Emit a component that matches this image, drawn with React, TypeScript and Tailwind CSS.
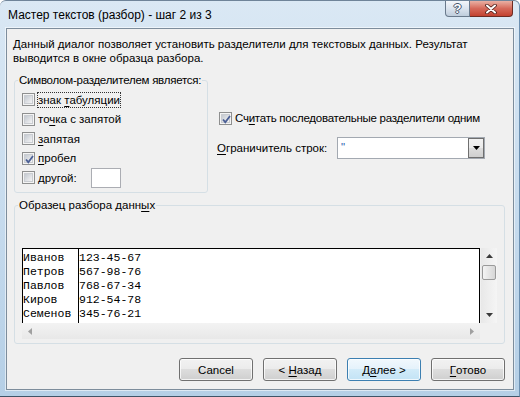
import clsx from 'clsx'
import type { ReactNode } from 'react'

function U({ children }: { children: ReactNode }) {
    return <span className="underline underline-offset-[2px]">{children}</span>
}

function Check({ on }: { on?: boolean }) {
    return (
        <span className="relative flex h-[13px] w-[13px] shrink-0 items-center justify-center border border-[#8e8f8f] bg-[#f4f4f4]">
            <span className="h-[9px] w-[9px] border border-[#c9ccd1] bg-gradient-to-br from-[#c4c9d0] to-[#f4f4f5]" />
            {on && (
                <svg className="absolute left-[1px] top-[1px]" width="11" height="11" viewBox="0 0 11 11">
                    <path d="M2 5.5 L4.3 8.2 L9 2" fill="none" stroke="#4b5f95" strokeWidth="1.8" />
                </svg>
            )}
        </span>
    )
}

function Btn({ children, focus }: { children: ReactNode; focus?: boolean }) {
    return (
        <div
            className={clsx(
                'flex h-[23px] w-[74px] items-center justify-center whitespace-pre rounded-[3px] border shadow-[inset_0_0_0_1px_rgba(255,255,255,0.75)]',
                focus
                    ? 'border-[#3c7fb1] bg-[linear-gradient(#f1f8fd_0%,#e4f2fb_50%,#d2ebf9_50%,#c3e3f5_100%)]'
                    : 'border-[#707070] bg-[linear-gradient(#f2f2f2_0%,#ebebeb_50%,#dddddd_50%,#cfcfcf_100%)]'
            )}
        >
            {children}
        </div>
    )
}

const delimiters: { label: ReactNode; on?: boolean; focus?: boolean }[] = [
    { label: <>знак <U>т</U>абуляции</>, focus: true },
    { label: <>то<U>ч</U>ка с запятой</> },
    { label: <><U>з</U>апятая</> },
    { label: <><U>п</U>робел</>, on: true },
]

export default function App() {
    return (
        <div className="flex h-[397px] w-[520px] flex-col overflow-hidden rounded-t-[6px] border-t border-r border-b border-t-[#6f8499] border-r-[#6b8fb0] border-b-[#3f5467] bg-gradient-to-b from-[#dae8f4] via-[#c8dcee] to-[#b5cfe6] font-['Liberation_Sans',Arial,sans-serif] text-[11.5px] leading-[14px] text-black">
            {/* Title bar */}
            <div className="flex h-[27px] shrink-0 items-start justify-between pl-[8px] pr-[6px]">
                <span className="pt-[7px] text-[12px]">Мастер текстов (разбор) - шаг 2 из 3</span>
                <div className="flex">
                    <div className="flex h-[16px] w-[25px] items-center justify-center rounded-bl-[4px] border border-t-0 border-[#6a7a8c] bg-gradient-to-b from-[#f3f6fa] via-[#dbe4ee] to-[#bfcddc] text-[13px] font-bold text-white [text-shadow:1px_0_#44546a,-1px_0_#44546a,0_1px_#44546a,0_-1px_#44546a]">
                        ?
                    </div>
                    <div className="flex h-[16px] w-[43px] items-center justify-center rounded-br-[4px] border border-t-0 border-l-0 border-[#6d2b22] bg-gradient-to-b from-[#e9b0a4] via-[#d5695a] to-[#c2412f]">
                        <svg width="14" height="10" viewBox="0 0 14 10">
                            <path d="M3 1.5 L11 8.5 M11 1.5 L3 8.5" stroke="#4a1c16" strokeWidth="3.6" strokeLinecap="round" />
                            <path d="M3 1.5 L11 8.5 M11 1.5 L3 8.5" stroke="#ffffff" strokeWidth="2" strokeLinecap="round" />
                        </svg>
                    </div>
                </div>
            </div>

            {/* Client area */}
            <div className="ml-[6px] flex h-[362px] w-[508px] shrink-0 flex-col border border-[#7d8d9c] bg-[#f0f0f0] shadow-[0_0_0_1px_rgba(255,255,255,0.55)]">
                <p className="pl-[6px] pt-[8px]">
                    Данный диалог позволяет установить разделители для текстовых данных. Результат
                    <br />
                    выводится в окне образца разбора.
                </p>

                <div className="mt-[8px] flex">
                    <fieldset className="ml-[7px] h-[120px] w-[194px] shrink-0 rounded-[3px] border border-[#d5dfe5]">
                        <legend className="ml-[3px] whitespace-nowrap px-[1px] tracking-[-0.25px]">Символом-разделителем является:</legend>
                        <div className="flex flex-col pl-[7px] pt-[3px]">
                            {delimiters.map((d, i) => (
                                <div key={i} className="flex h-[19.5px] items-center">
                                    <Check on={d.on} />
                                    <span
                                        className={clsx(
                                            'ml-[2px] border',
                                            d.focus ? 'border-dotted border-[#333]' : 'border-transparent'
                                        )}
                                    >
                                        {d.label}
                                    </span>
                                </div>
                            ))}
                            <div className="flex h-[19.5px] items-center">
                                <Check />
                                <span className="ml-[2px] w-[54px] border border-transparent">
                                    <U>д</U>ругой:
                                </span>
                                <div className="h-[20px] w-[30px] border border-[#abadb3] bg-white" />
                            </div>
                        </div>
                    </fieldset>

                    <div className="ml-[9px] flex flex-col pt-[37px]">
                        <div className="flex h-[16px] items-center pl-[2px]">
                            <Check on />
                            <span className="ml-[3px] tracking-[-0.25px]">
                                Сч<U>и</U>тать последовательные разделители одним
                            </span>
                        </div>
                        <div className="mt-[11px] flex items-center">
                            <span className="w-[120px]">
                                <U>О</U>граничитель строк:
                            </span>
                            <div className="flex h-[22px] w-[148px] items-stretch border border-[#a3a9b1] bg-white">
                                <span className="flex-1 pl-[3px] pt-[2px] text-[#2a63b0]">"</span>
                                <div className="flex w-[16px] items-center justify-center border border-[#6f6f6f] bg-[linear-gradient(#f2f2f2_0%,#ebebeb_50%,#dddddd_50%,#cfcfcf_100%)]">
                                    <svg width="7" height="4" viewBox="0 0 7 4">
                                        <path d="M0 0 H7 L3.5 4 Z" fill="#000" />
                                    </svg>
                                </div>
                            </div>
                        </div>
                    </div>
                </div>

                <fieldset className="ml-[7px] mt-[5px] h-[146px] w-[491px] rounded-[3px] border border-[#d5dfe5]">
                    <legend className="ml-[3px] whitespace-nowrap px-[1px]">
                        Образец разбора данн<U>ы</U>х
                    </legend>
                    <div className="pl-[7px] pt-[36px]">
                        <div className="flex">
                            <div className="flex h-[75px] w-[458px] border-x border-t border-black bg-white font-['Liberation_Mono','Courier_New',monospace] text-[11.5px] leading-[14px] whitespace-pre">
                                <div className="w-[55px] pt-[2px]">
                                    Иванов{'\n'}Петров{'\n'}Павлов{'\n'}Киров{'\n'}Семенов
                                </div>
                                <div className="border-l border-black pt-[2px]">
                                    123-45-67{'\n'}567-98-76{'\n'}768-67-34{'\n'}912-54-78{'\n'}345-76-21
                                </div>
                            </div>
                            <div className="ml-[1px] flex h-[75px] w-[16px] flex-col items-center bg-gradient-to-r from-[#e8e8e8] to-[#f5f5f5]">
                                <div className="flex h-[16px] items-center">
                                    <svg width="7" height="4" viewBox="0 0 7 4">
                                        <path d="M0 4 H7 L3.5 0 Z" fill="#3a3a3a" />
                                    </svg>
                                </div>
                                <div className="mt-[1px] h-[15px] w-[14px] rounded-[2px] border border-[#9a9a9a] bg-gradient-to-r from-[#f4f4f4] to-[#d6d6d6]" />
                                <div className="flex-1" />
                                <div className="flex h-[16px] items-center">
                                    <svg width="7" height="4" viewBox="0 0 7 4">
                                        <path d="M0 0 H7 L3.5 4 Z" fill="#3a3a3a" />
                                    </svg>
                                </div>
                            </div>
                        </div>
                        <div className="flex h-[16px] w-[458px] items-center justify-between bg-gradient-to-b from-[#f3f3f3] to-[#e8e8e8] px-[6px]">
                            <svg width="4" height="7" viewBox="0 0 4 7">
                                <path d="M4 0 V7 L0 3.5 Z" fill="#a0a0a0" />
                            </svg>
                            <svg width="4" height="7" viewBox="0 0 4 7">
                                <path d="M0 0 V7 L4 3.5 Z" fill="#a0a0a0" />
                            </svg>
                        </div>
                    </div>
                </fieldset>

                <div className="mt-[14px] flex justify-end gap-[10px] pr-[8px]">
                    <Btn>Cancel</Btn>
                    <Btn>
                        {'< '}
                        <U>Н</U>азад
                    </Btn>
                    <Btn focus>
                        Д<U>а</U>лее{' >'}
                    </Btn>
                    <Btn>
                        <U>Г</U>отово
                    </Btn>
                </div>
            </div>
        </div>
    )
}
